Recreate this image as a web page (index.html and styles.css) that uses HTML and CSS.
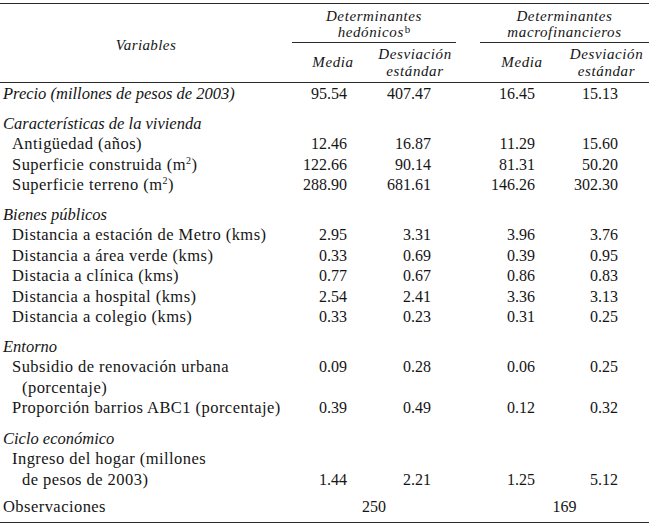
FILE: index.html
```html
<!DOCTYPE html>
<html lang="es">
<head>
<meta charset="utf-8">
<title>Determinantes</title>
<link rel="stylesheet" href="styles.css">
</head>
<body>
<table class="tbl">
  <colgroup>
    <col class="c-label">
    <col class="c-num1">
    <col class="c-num2">
    <col class="c-gap">
    <col class="c-num3">
    <col class="c-num4">
  </colgroup>
  <thead>
    <tr class="h1">
      <th class="hvar" rowspan="2">Variables</th>
      <th class="hgroup" colspan="2">Determinantes<br>hedónicos<sup class="sup">b</sup></th>
      <th class="hgap"></th>
      <th class="hgroup" colspan="2">Determinantes<br>macrofinancieros</th>
    </tr>
    <tr class="h2">
      <th class="hsub">Media</th>
      <th class="hsub">Desviación<br>estándar</th>
      <th class="hgap2"></th>
      <th class="hsub">Media</th>
      <th class="hsub">Desviación<br>estándar</th>
    </tr>
  </thead>
  <tbody>
    <tr class="first">
      <td class="cat">Precio (millones de pesos de 2003)</td>
      <td class="n n1">95.54</td><td class="n n2">407.47</td><td></td><td class="n n3">16.45</td><td class="n n4">15.13</td>
    </tr>
    <tr class="sec"><td class="cat" colspan="6">Características de la vivienda</td></tr>
    <tr><td class="item">Antigüedad (años)</td><td class="n n1">12.46</td><td class="n n2">16.87</td><td></td><td class="n n3">11.29</td><td class="n n4">15.60</td></tr>
    <tr><td class="item">Superficie construida (m<sup class="sq">2</sup>)</td><td class="n n1">122.66</td><td class="n n2">90.14</td><td></td><td class="n n3">81.31</td><td class="n n4">50.20</td></tr>
    <tr><td class="item">Superficie terreno (m<sup class="sq">2</sup>)</td><td class="n n1">288.90</td><td class="n n2">681.61</td><td></td><td class="n n3">146.26</td><td class="n n4">302.30</td></tr>
    <tr class="sec"><td class="cat" colspan="6">Bienes públicos</td></tr>
    <tr><td class="item">Distancia a estación de Metro (kms)</td><td class="n n1">2.95</td><td class="n n2">3.31</td><td></td><td class="n n3">3.96</td><td class="n n4">3.76</td></tr>
    <tr><td class="item">Distancia a área verde (kms)</td><td class="n n1">0.33</td><td class="n n2">0.69</td><td></td><td class="n n3">0.39</td><td class="n n4">0.95</td></tr>
    <tr><td class="item">Distacia a clínica (kms)</td><td class="n n1">0.77</td><td class="n n2">0.67</td><td></td><td class="n n3">0.86</td><td class="n n4">0.83</td></tr>
    <tr><td class="item">Distancia a hospital (kms)</td><td class="n n1">2.54</td><td class="n n2">2.41</td><td></td><td class="n n3">3.36</td><td class="n n4">3.13</td></tr>
    <tr><td class="item">Distancia a colegio (kms)</td><td class="n n1">0.33</td><td class="n n2">0.23</td><td></td><td class="n n3">0.31</td><td class="n n4">0.25</td></tr>
    <tr class="sec"><td class="cat" colspan="6">Entorno</td></tr>
    <tr class="top"><td class="item wrap">Subsidio de renovación urbana<br>(porcentaje)</td><td class="n n1">0.09</td><td class="n n2">0.28</td><td></td><td class="n n3">0.06</td><td class="n n4">0.25</td></tr>
    <tr><td class="item">Proporción barrios ABC1 (porcentaje)</td><td class="n n1">0.39</td><td class="n n2">0.49</td><td></td><td class="n n3">0.12</td><td class="n n4">0.32</td></tr>
    <tr class="sec sec2"><td class="cat" colspan="6">Ciclo económico</td></tr>
    <tr class="bottom"><td class="item wrap">Ingreso del hogar (millones<br>de pesos de 2003)</td><td class="n n1">1.44</td><td class="n n2">2.21</td><td></td><td class="n n3">1.25</td><td class="n n4">5.12</td></tr>
    <tr class="obs">
      <td class="plain">Observaciones</td>
      <td class="ctr" colspan="2">250</td>
      <td></td>
      <td class="ctr" colspan="2">169</td>
    </tr>
  </tbody>
</table>
</body>
</html>
```

FILE: styles.css
```css
html, body {
  margin: 0;
  padding: 0;
  background: #ffffff;
}

body {
  color: #151515;
  font-family: "Liberation Serif", "DejaVu Serif", serif;
  font-size: 16.5px;
}

.tbl {
  width: 649px;
  margin-top: 3px;
  border-collapse: collapse;
  table-layout: fixed;
  border-top: 1px solid #2a2a2a;
  border-bottom: 1px solid #2a2a2a;
}

.c-label { width: 292px; }
.c-num1 { width: 82px; }
.c-num2 { width: 82px; }
.c-gap { width: 24px; }
.c-num3 { width: 84px; }
.c-num4 { width: 85px; }

th, td {
  padding: 0;
  font-weight: normal;
}

thead th {
  font-style: italic;
  font-size: 15px;
  letter-spacing: 0.6px;
  text-align: center;
}

.h1 th {
  height: 37px;
  line-height: 16px;
  vertical-align: middle;
}

.hgroup {
  border-bottom: 1px solid #2a2a2a;
  padding-top: 1px;
}

.hvar {
  border-bottom: 1px solid #2a2a2a;
  letter-spacing: 0.4px;
  padding-top: 3px;
}

.h2 th {
  height: 39px;
  line-height: 17px;
  border-bottom: 1px solid #2a2a2a;
  vertical-align: middle;
}

.sup {
  font-style: normal;
  font-size: 11px;
  letter-spacing: 0;
  vertical-align: 4px;
  line-height: 0;
  margin-left: 1px;
}

.sq {
  font-size: 10px;
  vertical-align: 6px;
  line-height: 0;
}

tbody td {
  line-height: 20.5px;
  vertical-align: top;
  white-space: nowrap;
}

.first td { padding-top: 1px; }

.sec td { padding-top: 9px; }
.sec2 td { padding-top: 10px; }

.cat {
  font-style: italic;
  padding-left: 3px;
}

.item {
  padding-left: 12px;
  letter-spacing: 0.45px;
}

.wrap {
  padding-left: 22px;
  text-indent: -10px;
}

.plain {
  padding-left: 3px;
  letter-spacing: 0.45px;
}

.n {
  text-align: right;
  font-size: 16px;
}

.n1 { padding-right: 27px; }
.n2 { padding-right: 25px; }
.n3 { padding-right: 29px; }
.n4 { padding-right: 31px; }

.top td { vertical-align: top; }
.bottom td { vertical-align: bottom; }

.obs td {
  padding-top: 7px;
  padding-bottom: 4px;
}

.ctr {
  text-align: center;
  font-size: 16px;
}
```
